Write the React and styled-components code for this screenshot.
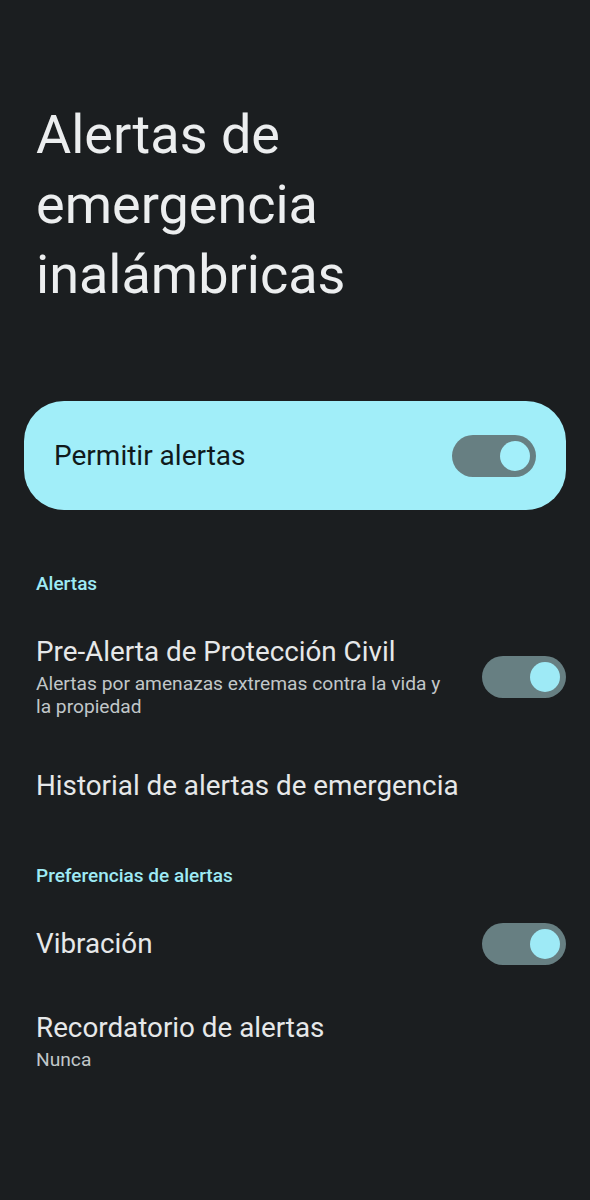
import React from 'react';
import styled, { createGlobalStyle } from 'styled-components';

const GlobalStyle = createGlobalStyle`
  html, body {
    margin: 0;
    padding: 0;
    background: #1b1e20;
  }
  body {
    font-family: Roboto, "Noto Sans", sans-serif;
    -webkit-font-smoothing: antialiased;
  }
`;

const Page = styled.div`
  min-height: 1200px;
  background: #1b1e20;
  padding-top: 100px;
  box-sizing: border-box;
`;

const Title = styled.h1`
  margin: 0 0 91px;
  padding: 0 36px;
  font-size: 54px;
  font-weight: 400;
  line-height: 70px;
  color: #eceeef;
`;

const Card = styled.div`
  margin: 0 24px 62px;
  height: 109px;
  border-radius: 40px;
  background: #a1eef9;
  display: flex;
  align-items: center;
  justify-content: space-between;
  padding: 0 30px;
  box-sizing: border-box;

  span {
    font-size: 28px;
    color: #10191b;
  }
`;

const SectionHeader = styled.div`
  margin: 36px 0 14px;
  padding: 0 36px;
  font-size: 19px;
  font-weight: 500;
  line-height: 24px;
  color: #9eeaf5;
`;

const Row = styled.div`
  display: flex;
  align-items: center;
  justify-content: space-between;
  gap: 24px;
  padding: 26px 24px 26px 36px;
`;

const RowText = styled.div`
  flex: 1;
  min-width: 0;
`;

const RowTitle = styled.div`
  font-size: 27.8px;
  line-height: 32px;
  color: #e6e8e9;
  white-space: nowrap;
`;

const RowSummary = styled.div`
  margin-top: 4px;
  font-size: 19.2px;
  line-height: 23px;
  color: #c1c7c9;
  max-width: 415px;
`;

const Track = styled.div`
  width: 84px;
  height: 42px;
  margin: -5px 0;
  flex: none;
  border-radius: 21px;
  background: #677f82;
  display: flex;
  align-items: center;
  justify-content: flex-end;
  padding: 0 6px;
  box-sizing: border-box;
`;

const Thumb = styled.div`
  width: 30px;
  height: 30px;
  border-radius: 50%;
  background: ${p => (p.$onCard ? '#a3effa' : '#9eeaf6')};
`;

const Switch = ({ onCard }) => (
  <Track>
    <Thumb $onCard={onCard} />
  </Track>
);

const SettingRow = ({ title, summary, toggle }) => (
  <Row>
    <RowText>
      <RowTitle>{title}</RowTitle>
      {summary && <RowSummary>{summary}</RowSummary>}
    </RowText>
    {toggle && <Switch />}
  </Row>
);

export default function App() {
  return (
    <Page>
      <GlobalStyle />
      <Title>
        Alertas de
        <br />
        emergencia
        <br />
        inalámbricas
      </Title>
      <Card>
        <span>Permitir alertas</span>
        <Switch onCard />
      </Card>

      <SectionHeader>Alertas</SectionHeader>
      <SettingRow
        title="Pre-Alerta de Protección Civil"
        summary="Alertas por amenazas extremas contra la vida y la propiedad"
        toggle
      />
      <SettingRow title="Historial de alertas de emergencia" />

      <SectionHeader>Preferencias de alertas</SectionHeader>
      <SettingRow title="Vibración" toggle />
      <SettingRow title="Recordatorio de alertas" summary="Nunca" />
    </Page>
  );
}
